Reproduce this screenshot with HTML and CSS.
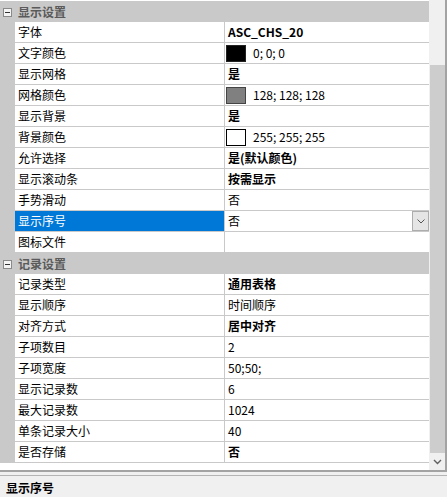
FILE: index.html
```html
<!DOCTYPE html>
<html lang="zh-CN">
<head>
<meta charset="utf-8">
<title>属性</title>
<link rel="stylesheet" href="styles.css">
</head>
<body>
<div class="app">
  <div class="grid-wrap">
    <div class="grid">
      <div class="section">
        <div class="gutter"><svg class="toggle" width="9" height="9" viewBox="0 0 9 9"><rect x="0.5" y="0.5" width="8" height="8" fill="#f4f4f4" stroke="#8a8a8a"/><line x1="2" y1="4.5" x2="7" y2="4.5" stroke="#333"/></svg></div>
        <div class="section-title">显示设置</div>
      </div>
      <div class="row"><div class="gutter"></div><div class="name">字体</div><div class="value bold">ASC_CHS_20</div></div>
      <div class="row"><div class="gutter"></div><div class="name">文字颜色</div><div class="value"><span class="swatch black"></span><span class="swatch-text">0; 0; 0</span></div></div>
      <div class="row"><div class="gutter"></div><div class="name">显示网格</div><div class="value bold">是</div></div>
      <div class="row"><div class="gutter"></div><div class="name">网格颜色</div><div class="value"><span class="swatch gray"></span><span class="swatch-text">128; 128; 128</span></div></div>
      <div class="row"><div class="gutter"></div><div class="name">显示背景</div><div class="value bold">是</div></div>
      <div class="row"><div class="gutter"></div><div class="name">背景颜色</div><div class="value"><span class="swatch white"></span><span class="swatch-text">255; 255; 255</span></div></div>
      <div class="row"><div class="gutter"></div><div class="name">允许选择</div><div class="value bold">是(默认颜色)</div></div>
      <div class="row"><div class="gutter"></div><div class="name">显示滚动条</div><div class="value bold">按需显示</div></div>
      <div class="row"><div class="gutter"></div><div class="name">手势滑动</div><div class="value">否</div></div>
      <div class="row selected"><div class="gutter"></div><div class="name">显示序号</div><div class="value combo"><span class="combo-text">否</span><span class="combo-btn"><svg width="8" height="5" viewBox="0 0 8 5"><polyline points="0.5,0.5 4,4 7.5,0.5" fill="none" stroke="#555" stroke-width="1"/></svg></span></div></div>
      <div class="row"><div class="gutter"></div><div class="name">图标文件</div><div class="value"></div></div>
      <div class="section">
        <div class="gutter"><svg class="toggle" width="9" height="9" viewBox="0 0 9 9"><rect x="0.5" y="0.5" width="8" height="8" fill="#f4f4f4" stroke="#8a8a8a"/><line x1="2" y1="4.5" x2="7" y2="4.5" stroke="#333"/></svg></div>
        <div class="section-title">记录设置</div>
      </div>
      <div class="row"><div class="gutter"></div><div class="name">记录类型</div><div class="value bold">通用表格</div></div>
      <div class="row"><div class="gutter"></div><div class="name">显示顺序</div><div class="value">时间顺序</div></div>
      <div class="row"><div class="gutter"></div><div class="name">对齐方式</div><div class="value bold">居中对齐</div></div>
      <div class="row"><div class="gutter"></div><div class="name">子项数目</div><div class="value">2</div></div>
      <div class="row"><div class="gutter"></div><div class="name">子项宽度</div><div class="value">50;50;</div></div>
      <div class="row"><div class="gutter"></div><div class="name">显示记录数</div><div class="value">6</div></div>
      <div class="row"><div class="gutter"></div><div class="name">最大记录数</div><div class="value">1024</div></div>
      <div class="row"><div class="gutter"></div><div class="name">单条记录大小</div><div class="value">40</div></div>
      <div class="row"><div class="gutter"></div><div class="name">是否存储</div><div class="value bold">否</div></div>
    </div>
    <div class="scrollbar">
      <div class="track"><div class="thumb"></div></div>
      <div class="arrow"><svg width="9" height="6" viewBox="0 0 9 6"><polyline points="1,1 4.5,4.5 8,1" fill="none" stroke="#606060" stroke-width="1.4"/></svg></div>
    </div>
  </div>
  <div class="desc">
    <div class="desc-title">显示序号</div>
  </div>
</div>
</body>
</html>
```

FILE: styles.css
```css
* { box-sizing: border-box; }
html, body { margin: 0; padding: 0; background: #f0f0f0; }
body {
  font-family: "Noto Sans CJK SC", "Microsoft YaHei", "Noto Sans", sans-serif;
  font-size: 12px;
  color: #000;
}
.app {
  width: 447px;
  height: 497px;
  display: flex;
  flex-direction: column;
  overflow: hidden;
}
.grid-wrap {
  height: 472px;
  display: flex;
  background: #fff;
  border-right: 2px solid #a3a3a3;
  border-bottom: 2px solid #a3a3a3;
}
.grid {
  width: 429px;
  padding-top: 1px;
  display: flex;
  flex-direction: column;
}
.section {
  height: 21px;
  display: flex;
  background: #c9c9c9;
}
.gutter {
  width: 15px;
  flex: none;
  background: #c9c9c9;
  display: flex;
  align-items: center;
  justify-content: center;
}
.section .gutter { padding-left: 0; }
.toggle { display: block; margin-left: 0; margin-top: 1px; }
.section-title {
  padding-left: 3px;
  line-height: 21px;
  font-weight: bold;
  color: #5a5a5a;
}
.row {
  height: 21px;
  display: flex;
  border-bottom: 1px solid #c9c9c9;
}
.name {
  width: 210px;
  flex: none;
  padding-left: 3px;
  line-height: 20px;
  border-right: 1px solid #c9c9c9;
  white-space: nowrap;
}
.value {
  flex: 1;
  padding-left: 3px;
  line-height: 20px;
  white-space: nowrap;
  display: flex;
  align-items: center;
}
.bold { font-weight: bold; }
.selected .name {
  background: #0078d7;
  color: #fff;
}
.swatch {
  width: 20px;
  height: 17px;
  margin-left: -2px;
  border: 1px solid #222;
  flex: none;
}
.swatch.black { background: #000; }
.swatch.gray { background: #808080; border-color: #444; }
.swatch.white { background: #fff; border-color: #000; }
.swatch-text { margin-left: 7px; }
.combo { justify-content: space-between; padding-right: 0; }
.combo-btn {
  width: 17px;
  height: 20px;
  background: #e5e5e5;
  border: 1px solid #adadad;
  display: flex;
  align-items: center;
  justify-content: center;
}
.combo-btn svg { display: block; }
.scrollbar {
  width: 16px;
  display: flex;
  flex-direction: column;
  background: #f0f0f0;
}
.track {
  flex: 1;
  padding-top: 65px;
}
.thumb {
  height: 388px;
  margin-left: 1px;
  background: #cdcdcd;
}
.arrow {
  height: 17px;
  display: flex;
  align-items: center;
  justify-content: center;
}
.arrow svg { display: block; }
.desc {
  flex: 1;
  margin-top: 3px;
  border-top: 1px solid #b4b4b4;
  background: #f0f0f0;
  padding: 3px 6px;
}
.desc-title {
  font-weight: bold;
  line-height: 18px;
}
```
